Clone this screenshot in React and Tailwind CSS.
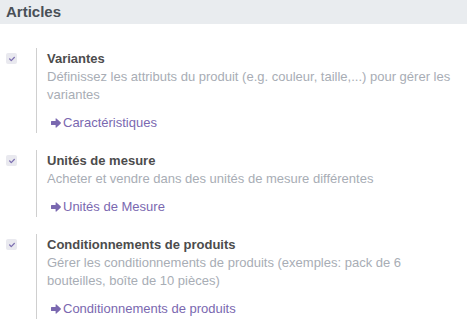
import React from "react";
import { FaCheck } from "react-icons/fa";

const settings = [
  {
    title: "Variantes",
    description: "Définissez les attributs du produit (e.g. couleur, taille,...) pour gérer les variantes",
    link: "Caractéristiques",
  },
  {
    title: "Unités de mesure",
    description: "Acheter et vendre dans des unités de mesure différentes",
    link: "Unités de Mesure",
  },
  {
    title: "Conditionnements de produits",
    description: "Gérer les conditionnements de produits (exemples: pack de 6 bouteilles, boîte de 10 pièces)",
    link: "Conditionnements de produits",
  },
];

// chunky font-awesome style arrow
function ArrowIcon() {
  return (
    <svg width="10" height="10" viewBox="0 0 10 10" className="shrink-0">
      <path
        d="M0.6 3H4.6V0.9Q4.6 0 5.4 0.6L9.6 4.3Q10.1 5 9.6 5.7L5.4 9.4Q4.6 10 4.6 9.1V7H0.6Q0 7 0 6.4V3.6Q0 3 0.6 3Z"
        fill="currentColor"
      />
    </svg>
  );
}

function SettingRow({ setting }) {
  return (
    <div className="flex">
      <div className="w-[36px] shrink-0 pl-[6px] pt-[5px]">
        <div className="w-[11px] h-[11px] rounded-[2px] bg-[#e9e9ef] flex items-center justify-center">
          <FaCheck className="text-[#7c6fb0]" size={6} />
        </div>
      </div>
      <div className="border-l border-[#cfcfcf] pl-[10px] pt-[2px] pb-[1px] pr-2">
        <div className="font-bold text-[#4c4c4c] leading-[18px]">{setting.title}</div>
        <div className="text-[#a8adb5] leading-[18px]">{setting.description}</div>
        <div className="mt-[10px] pl-[4px] flex items-center gap-[2px] text-[#7a68b0] leading-[18px]">
          <ArrowIcon />
          <span>{setting.link}</span>
        </div>
      </div>
    </div>
  );
}

export default function App() {
  return (
    <div className="w-[467px] h-[321px] bg-white overflow-hidden font-['Liberation_Sans',Arial,sans-serif] text-[13px]">
      <div className="bg-[#e9ecef] h-[24px] pl-[6px] flex items-center">
        <h2 className="text-[15px] font-bold text-[#495057]">Articles</h2>
      </div>
      <div className="pt-[24px] flex flex-col gap-[17px]">
        {settings.map((setting) => (
          <SettingRow key={setting.title} setting={setting} />
        ))}
      </div>
    </div>
  );
}
